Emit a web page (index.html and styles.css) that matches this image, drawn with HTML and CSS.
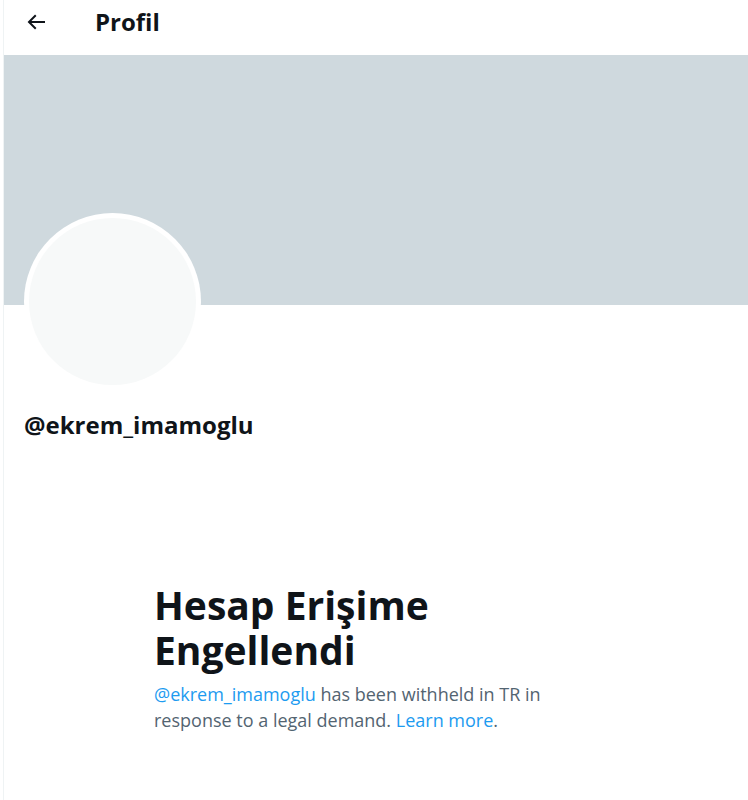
FILE: index.html
```html
<!DOCTYPE html>
<html lang="tr">
<head>
    <meta charset="UTF-8">
    <title>Profil</title>
    <link rel="stylesheet" href="styles.css">
</head>
<body>
    <div class="page">
        <div class="topbar">
            <div class="back">
                <svg viewBox="0 0 24 24" width="24" height="24"><path d="M7.414 13l5.043 5.04-1.414 1.42L3.586 12l7.457-7.46 1.414 1.42L7.414 11H21v2H7.414z"></path></svg>
            </div>
            <h2 class="title">Profil</h2>
        </div>

        <div class="banner"></div>

        <div class="profile">
            <div class="avatar"><div class="avatar-inner"></div></div>
            <div class="handle">@ekrem_imamoglu</div>
        </div>

        <div class="withheld">
            <h1>Hesap Erişime Engellendi</h1>
            <p><a href="#">@ekrem_imamoglu</a> has been withheld in TR in response to a legal demand. <a href="#">Learn more</a>.</p>
        </div>
    </div>
</body>
</html>
```

FILE: styles.css
```css
body {
    margin: 0;
    font-family: "Open Sans", "Noto Sans", sans-serif;
    color: #0f1419;
    background: #fff;
}
.page {
    margin-left: 3px;
    border-left: 1px solid #eff3f4;
    min-height: 800px;
}
.topbar {
    height: 55px;
    box-sizing: border-box;
    display: flex;
    align-items: center;
    padding: 0 0 12px 20px;
}
.back {
    width: 24px;
    height: 24px;
    margin-right: 47px;
}
.back svg {
    fill: #0f1419;
    display: block;
}
.title {
    margin: 0;
    font-size: 24px;
    font-weight: 700;
    line-height: 28px;
}
.banner {
    height: 250px;
    background: #cfd9de;
}
.profile {
    padding: 0 20px;
}
.avatar {
    width: 177px;
    height: 177px;
    margin-top: -92px;
    border-radius: 50%;
    background: #fff;
    display: flex;
    align-items: center;
    justify-content: center;
}
.avatar-inner {
    width: 167px;
    height: 167px;
    border-radius: 50%;
    background: #f7f9f9;
}
.handle {
    margin-top: 20px;
    font-size: 24px;
    font-weight: 700;
    line-height: 30px;
}
.withheld {
    margin: 142px 0 0 150px;
    width: 400px;
}
.withheld h1 {
    margin: 0 0 9px;
    font-size: 39px;
    font-weight: 700;
    line-height: 45px;
}
.withheld p {
    margin: 0;
    color: #536471;
    font-size: 18px;
    line-height: 26px;
}
.withheld a {
    color: #1d9bf0;
    text-decoration: none;
}
```
